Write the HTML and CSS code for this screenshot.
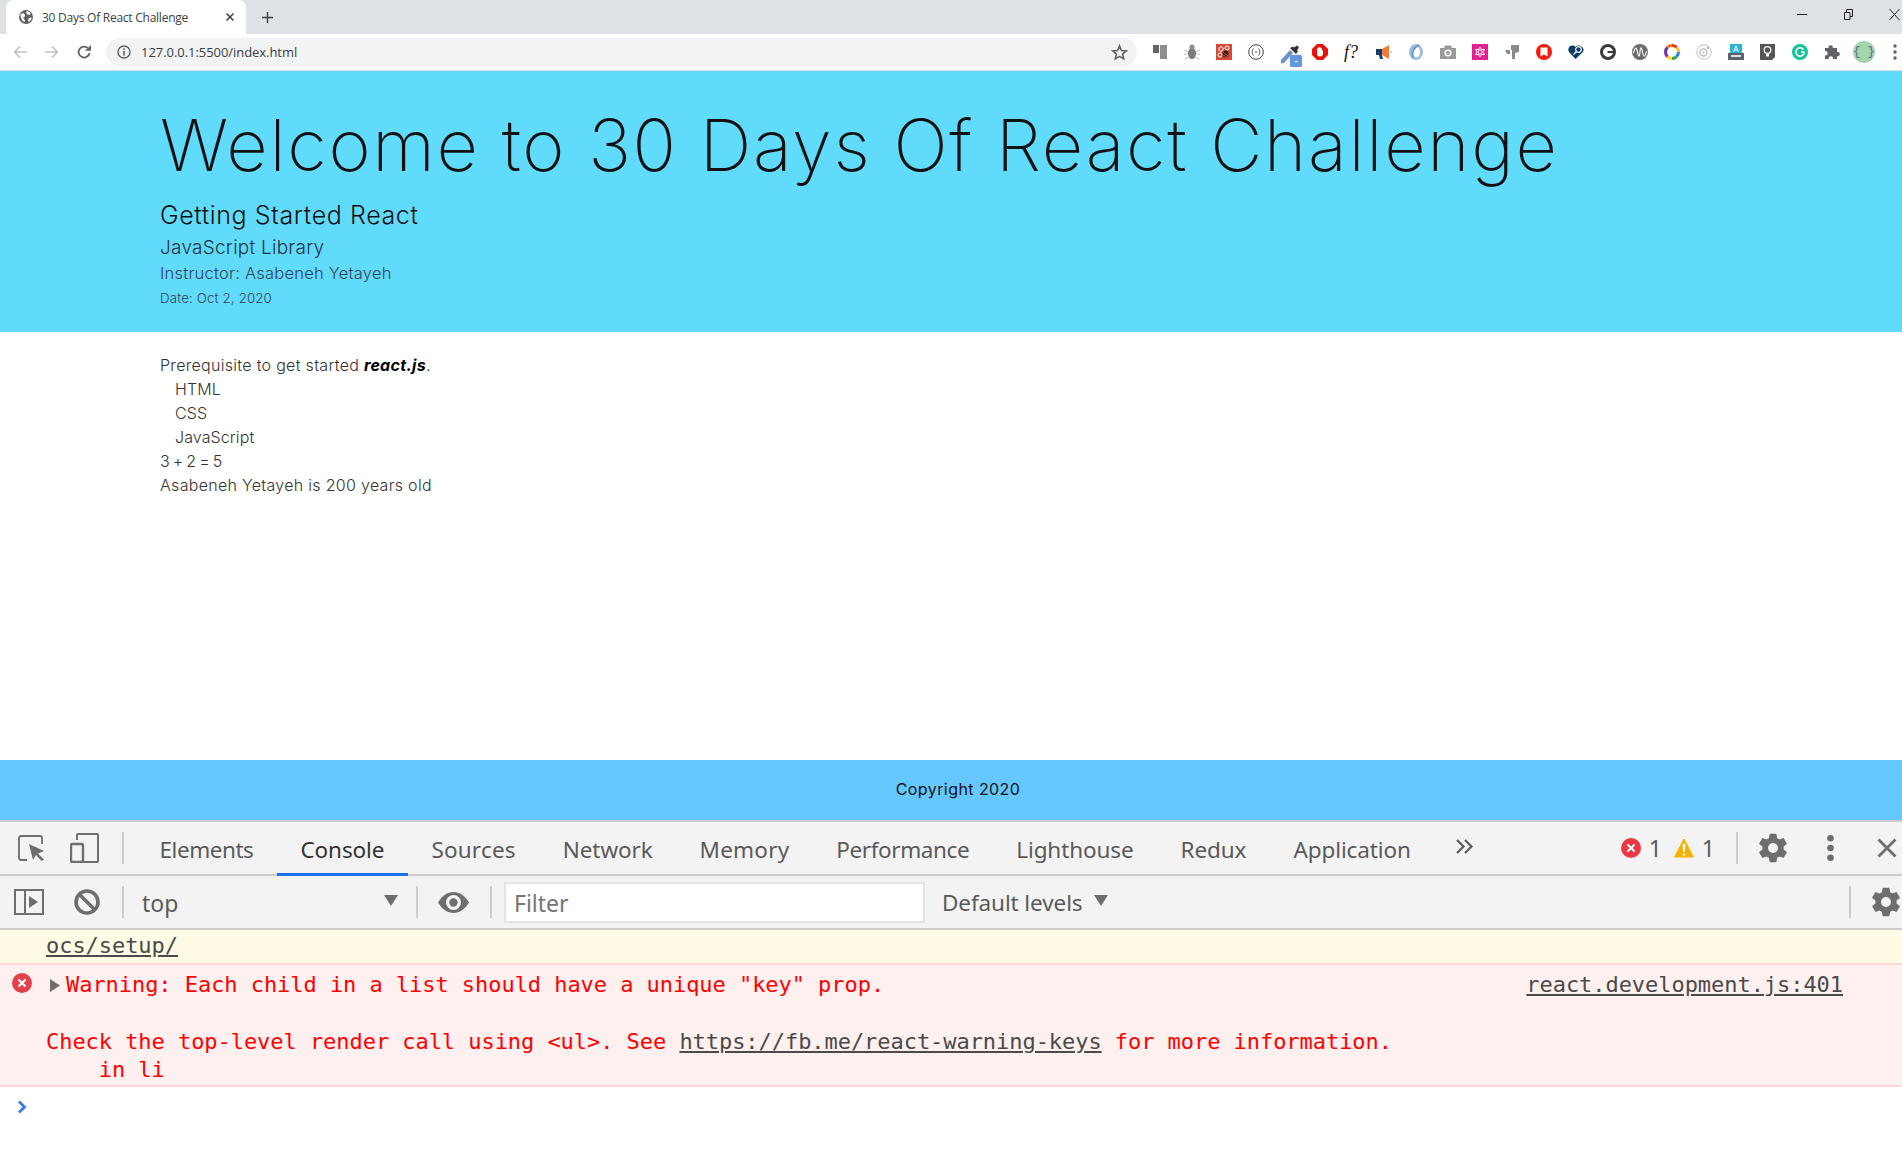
FILE: index.html
```html
<!DOCTYPE html>
<html lang="en">
<head>
<meta charset="utf-8">
<title>30 Days Of React Challenge</title>
<link rel="stylesheet" href="styles.css">
</head>
<body>
<div class="chrome">
  <div class="tabstrip">
    <div class="tab">
      <svg class="favicon" viewBox="0 0 16 16"><circle cx="8" cy="8" r="8" fill="#5f6368"/><path d="M1.500 5l3-1.500 2 1.500.5 2.500-2 .5.500 2.500 1.500 1-1 2.500-2.500-2.500-1.500-3.500zM9 1.200l3 1 1.500 2.800-3.500.5-2-2.500zM11 9.500l3-1 .5 1.500-2.500 3-1.500.5z" fill="#fff"/></svg>
      <span class="tab-title">30 Days Of React Challenge</span>
      <svg class="tab-close" viewBox="0 0 8 8"><path d="M.5.5l7 7M7.500.5l-7 7" stroke="#3c4043" stroke-width="1.500"/></svg>
    </div>
    <svg class="newtab" viewBox="0 0 12 12"><path d="M6 0v12M0 6h12" stroke="#3c4043" stroke-width="1.600"/></svg>
    <div class="winctl">
      <svg viewBox="0 0 11 11"><path d="M0 5.500h10" stroke="#222" stroke-width="1"/></svg>
      <svg viewBox="0 0 11 11"><path d="M1.500 3.500h5.500v7H1.500zM3.500 3.500v-3h6v7H7" fill="none" stroke="#222" stroke-width="1"/></svg>
      <svg viewBox="0 0 11 11"><path d="M.5 0l10 11M10.500 0L.5 11" stroke="#222" stroke-width="1"/></svg>
    </div>
  </div>
  <div class="toolbar">
    <svg class="nav" viewBox="0 0 14 14"><path d="M14 7H1.500M7 1.500L1.500 7 7 12.500" fill="none" stroke="#c0c2c6" stroke-width="1.700"/></svg>
    <svg class="nav" viewBox="0 0 14 14"><path d="M0 7h12.500M7 1.500L12.500 7 7 12.500" fill="none" stroke="#c0c2c6" stroke-width="1.700"/></svg>
    <svg class="nav" viewBox="0 0 14 14"><path d="M12.500 8A5.500 5.500 0 1 1 10.800 3" fill="none" stroke="#5f6368" stroke-width="1.800"/><path d="M8 5.800h6V0z" fill="#5f6368"/></svg>
    <div class="omnibox">
      <svg class="info" viewBox="0 0 14 14"><circle cx="7" cy="7" r="6" fill="none" stroke="#5f6368" stroke-width="1.400"/><path d="M7 6v4.500M7 3.300v1.500" stroke="#5f6368" stroke-width="1.600"/></svg>
      <span class="url">127.0.0.1:5500/index.html</span>
      <svg class="star" viewBox="0 0 16 16"><path d="M8 1.800l1.800 4.300 4.600.4-3.500 3 1.100 4.500L8 11.600l-4 2.400 1.100-4.500-3.500-3 4.600-.4z" fill="none" stroke="#5f6368" stroke-width="1.500"/></svg>
    </div>
    <div class="extensions">
      <svg viewBox="0 0 16 16"><path d="M1 1h6v8H1z" fill="#666"/><path d="M8 1h7v14H8z" fill="#8f8f8f"/></svg>
      <svg viewBox="0 0 16 16"><ellipse cx="8" cy="9.500" rx="4" ry="5.500" fill="#7b7b7b"/><circle cx="8" cy="3" r="2.500" fill="#8a8a8a"/><path d="M0 6l4 2M16 6l-4 2M0 10h4M16 10h-4M1 15l3-2M15 15l-3-2" stroke="#b5b5b5"/></svg>
      <svg viewBox="0 0 16 16"><rect width="16" height="16" fill="#d64a38"/><circle cx="5" cy="5" r="2.200" fill="none" stroke="#fff"/><circle cx="11" cy="4" r="2" fill="none" stroke="#fff"/><circle cx="4" cy="11" r="2" fill="none" stroke="#fff"/><ellipse cx="9.500" cy="10" rx="3" ry="3.500" fill="#222"/><path d="M7 8l5 4M7 11l4 2" stroke="#d64a38"/></svg>
      <svg viewBox="0 0 16 16"><circle cx="8" cy="8" r="7.300" fill="#fff" stroke="#444" stroke-width="1"/><path d="M5.500 4.500C4 6 4.500 7.500 4 8c.5.500 0 2 1.500 3.500M10.500 4.500C12 6 11.500 7.500 12 8c-.5.500 0 2-1.500 3.500M7 8h2" fill="none" stroke="#444"/></svg>
      <svg viewBox="0 0 21 22"><path d="M0 15L9 5l3 3-9 10-3 .5z" fill="#6b92c8"/><path d="M9 3l6 6 2-2.500-1-1 2-3-2-2-3 2-1-1z" fill="#333"/><rect x="9" y="10" width="12" height="12" rx="1.500" fill="#5f97e0"/><rect x="14" y="16" width="2.500" height="1.200" fill="#fff"/></svg>
      <svg viewBox="0 0 16 16"><path d="M5 0h6l5 5v6l-5 5H5l-5-5V5z" fill="#e8140b"/><path d="M5 6V4.500h1V3.500h1V3.200h1v.3h1v1h1v2.500l1-1v3.500c0 2-1 3-3.200 3S5 11 5 9z" fill="#fff"/></svg>
      <span class="ext-f">f?</span>
      <svg viewBox="0 0 16 16"><path d="M0 5h6v6H0zM3 11h3l1 4H4z" fill="#153e63"/><path d="M6 5l7-4v14l-7-4z" fill="#f47a3c"/><path d="M14 7h2v2h-2z" fill="#c6d3de"/></svg>
      <svg viewBox="0 0 16 16"><ellipse cx="8" cy="8" rx="7" ry="8" fill="#9cbde2"/><ellipse cx="8.500" cy="8" rx="3.500" ry="5.500" fill="#fff"/><path d="M5 14C3 9 6 3 11 1" fill="none" stroke="#5f8fc6" stroke-width="1.600"/></svg>
      <svg viewBox="0 0 16 16"><path d="M0 4h4l1-2.500h6L12 4h4v11H0z" fill="#9a9a9a"/><circle cx="8" cy="9" r="3.600" fill="#fff"/><circle cx="8" cy="9" r="2" fill="#9a9a9a"/></svg>
      <svg viewBox="0 0 16 16"><rect width="16" height="16" fill="#e6208f"/><g fill="none" stroke="#fff"><circle cx="8" cy="8" r="2"/><path d="M8 3l1.500 2.500h3L11 8l1.500 2.500h-3L8 13l-1.500-2.500h-3L5 8 3.500 5.500h3z"/></g></svg>
      <svg viewBox="0 0 16 16"><path d="M7 1h8v7l-4 1v6H8V6H7zM1 6h5v4H3z" fill="#8a8a8a"/></svg>
      <svg viewBox="0 0 16 16"><circle cx="8" cy="8" r="8" fill="#f31b0e"/><path d="M4.500 3.500h7v9L8 10.500l-3.500 2z" fill="#fff"/></svg>
      <svg viewBox="0 0 16 16"><path d="M7.500 15L1 8C-1 4 2 1 5 1.500 6.500 1.800 7.500 3 7.500 3S8.500 1.800 10 1.500c3-.5 7 2.500 5 6.500z" fill="#0e3b66"/><circle cx="10.500" cy="5.500" r="2.800" fill="#0e3b66" stroke="#fff" stroke-width="1.200"/><path d="M8.500 7.500l-3 3" stroke="#fff" stroke-width="1.300"/></svg>
      <svg viewBox="0 0 16 16"><circle cx="8" cy="8" r="6.500" fill="#fff" stroke="#3a3a3a" stroke-width="3"/><path d="M7.500 8H14" stroke="#3a3a3a" stroke-width="2"/></svg>
      <svg viewBox="0 0 16 16"><circle cx="8" cy="8" r="8" fill="#6c6c6c"/><path d="M1.500 9C3 3 4.500 2.500 5.500 8s2 5.500 2.500 0 1.500-5.500 2.500 0 2.500 6 4-1" fill="none" stroke="#fff" stroke-width="1.100"/></svg>
      <svg viewBox="0 0 16 16" fill="none" stroke-width="3"><path d="M8 1.500a6.500 6.500 0 0 1 4.600 1.900" stroke="#e53935"/><path d="M12.600 3.400A6.500 6.500 0 0 1 14.500 8" stroke="#fbc02d"/><path d="M14.500 8a6.500 6.500 0 0 1-1.900 4.600" stroke="#1e88e5"/><path d="M12.600 12.600A6.500 6.500 0 0 1 8 14.500" stroke="#43a047"/><path d="M8 14.500a6.500 6.500 0 0 1-4.600-1.900" stroke="#fdd835"/><path d="M3.400 12.600A6.500 6.500 0 0 1 1.500 8" stroke="#8e24aa"/><path d="M1.500 8a6.500 6.500 0 0 1 1.900-4.600" stroke="#5e35b1"/><path d="M3.400 3.400A6.500 6.500 0 0 1 8 1.500" stroke="#f57c00"/></svg>
      <svg viewBox="0 0 16 16"><circle cx="8" cy="8" r="7.200" fill="#fff" stroke="#cfcfcf" stroke-width="1.200"/><circle cx="7.500" cy="8.500" r="3.500" fill="none" stroke="#bdbdbd" stroke-width="1.400"/><circle cx="7.500" cy="8.500" r="1.300" fill="#c8c8c8"/><circle cx="12" cy="4" r="1" fill="#999"/></svg>
      <svg viewBox="0 0 16 16"><rect x="2" y="0" width="12" height="10" fill="#2ab4d8"/><path d="M5.500 8L8 2l2.500 6M6.500 6h3" fill="none" stroke="#fff"/><rect x="0" y="9" width="16" height="7" fill="#5d6468"/><rect x="3" y="11" width="10" height="2" fill="#dde"/></svg>
      <svg viewBox="0 0 16 16"><path d="M0 0h15v13l-3 3H0z" fill="#555"/><circle cx="7.500" cy="6" r="3.300" fill="none" stroke="#fff" stroke-width="1.200"/><rect x="6" y="10" width="3" height="2.500" fill="#fff"/></svg>
      <svg viewBox="0 0 16 16"><circle cx="8" cy="8" r="8" fill="#15c39a"/><path d="M11.500 5.500A4.200 4.200 0 1 0 12 9.500l-.3-1.500H9" fill="none" stroke="#fff" stroke-width="1.600"/></svg>
      <svg viewBox="0 0 16 16"><path d="M1 4h3.500a2.200 2.200 0 1 1 4.300 0H13v4a2.200 2.200 0 1 1 0 4.200V15H9a2.200 2.200 0 1 0-4.200 0H1v-3.500a2.200 2.200 0 1 0 0-4.300z" fill="#5f6368"/></svg>
      <span class="avatar">{ }</span>
      <svg class="kebab" viewBox="0 0 4 16"><circle cx="2" cy="2" r="1.700" fill="#5f6368"/><circle cx="2" cy="8" r="1.700" fill="#5f6368"/><circle cx="2" cy="14" r="1.700" fill="#5f6368"/></svg>
    </div>
  </div>
</div>
<div class="page">
  <header class="hero">
    <h1>Welcome to 30 Days Of React Challenge</h1>
    <h2>Getting Started React</h2>
    <h3>JavaScript Library</h3>
    <p class="instructor">Instructor: Asabeneh Yetayeh</p>
    <small class="date">Date: Oct 2, 2020</small>
  </header>
  <main class="content">
    <p class="line">Prerequisite to get started <strong><em>react.js</em></strong>.</p>
    <ul>
      <li>HTML</li>
      <li>CSS</li>
      <li>JavaScript</li>
    </ul>
    <p class="line sum">3 + 2 = 5</p>
    <p class="line">Asabeneh Yetayeh is 200 years old</p>
  </main>
  <footer class="foot">Copyright 2020</footer>
</div>
<div class="devtools">
  <div class="dt-tabs">
    <svg class="inspect" viewBox="0 0 27 26"><path d="M9 25H3a2 2 0 0 1-2-2V3a2 2 0 0 1 2-2h19a2 2 0 0 1 2 2v6" fill="none" stroke="#6e6e6e" stroke-width="1.800"/><path d="M11 9l15 7-6 2.500 6 6-2.500 1.500-5.500-6-3 5z" fill="#6e6e6e"/></svg>
    <svg class="device" viewBox="0 0 29 30"><path d="M7 7V2a1 1 0 0 1 1-1h19a1 1 0 0 1 1 1v26a1 1 0 0 1-1 1H13" fill="none" stroke="#6e6e6e" stroke-width="2"/><rect x="1" y="11" width="12" height="18" rx="1.500" fill="none" stroke="#6e6e6e" stroke-width="2.400"/></svg>
    <span class="dt-sep after-device"></span>
    <span class="dt-tab t-elements">Elements</span>
    <span class="dt-tab active">Console</span>
    <span class="dt-tab t-wide">Sources</span>
    <span class="dt-tab">Network</span>
    <span class="dt-tab t-wide">Memory</span>
    <span class="dt-tab t-perf">Performance</span>
    <span class="dt-tab">Lighthouse</span>
    <span class="dt-tab">Redux</span>
    <span class="dt-tab">Application</span>
    <svg class="chev" viewBox="0 0 17 15"><path d="M1 1l6.500 6.500L1 14M9 1l6.500 6.500L9 14" fill="none" stroke="#5a5a5a" stroke-width="2.200"/></svg>
    <div class="dt-right">
      <svg class="badge" viewBox="0 0 20 20"><circle cx="10" cy="10" r="10" fill="#ea3941"/><path d="M6.500 6.500l7 7M13.500 6.500l-7 7" stroke="#fff" stroke-width="2"/></svg>
      <span class="count">1</span>
      <svg class="badge" viewBox="0 0 20 20"><path d="M10 1l9.500 18H.5z" fill="#f4b400" stroke="#f4b400" stroke-linejoin="round"/><path d="M8.600 6h2.800l-.5 8H9.100zM8.800 15.500h2.400v2H8.800z" fill="#fff"/></svg>
      <span class="count second">1</span>
      <span class="dt-sep"></span>
      <svg class="gear" viewBox="0 0 24 24"><path fill="#6e6e6e" d="M19.430 12.980c.04-.32.07-.64.07-.98s-.03-.66-.07-.98l2.110-1.650c.19-.15.240-.42.120-.64l-2-3.460c-.12-.22-.39-.3-.61-.22l-2.490 1c-.52-.4-1.080-.73-1.690-.98l-.38-2.650A.49.49 0 0 0 14 2h-4c-.25 0-.46.180-.49.420l-.38 2.650c-.61.25-1.170.59-1.690.98l-2.490-1c-.23-.09-.49 0-.61.220l-2 3.460c-.13.220-.07.490.12.640l2.110 1.650c-.04.320-.07.650-.07.980s.03.660.07.980l-2.110 1.650c-.19.150-.24.420-.12.640l2 3.460c.12.220.39.300.61.220l2.490-1c.52.400 1.080.730 1.690.980l.38 2.650c.03.240.24.420.49.420h4c.25 0 .46-.18.490-.42l.38-2.650c.61-.25 1.170-.59 1.690-.98l2.490 1c.23.090.49 0 .61-.22l2-3.460c.12-.22.070-.49-.12-.64l-2.110-1.650zM12 15.500a3.500 3.500 0 1 1 0-7 3.500 3.500 0 0 1 0 7z"/></svg>
      <svg class="dots" viewBox="0 0 7 26"><circle cx="3.500" cy="3.300" r="3.300" fill="#6e6e6e"/><circle cx="3.500" cy="13" r="3.300" fill="#6e6e6e"/><circle cx="3.500" cy="22.700" r="3.300" fill="#6e6e6e"/></svg>
      <svg class="close" viewBox="0 0 20 20"><path d="M1.500 1.500l17 17M18.500 1.500l-17 17" stroke="#6e6e6e" stroke-width="2.800"/></svg>
    </div>
  </div>
  <div class="dt-bar">
    <svg class="sidebar" viewBox="0 0 30 26"><path d="M1 1h28v24H1zM11 1v24" fill="none" stroke="#6e6e6e" stroke-width="2"/><path d="M15 7l9 6-9 6z" fill="#6e6e6e"/></svg>
    <svg class="clear" viewBox="0 0 26 26"><circle cx="13" cy="13" r="11" fill="none" stroke="#6e6e6e" stroke-width="3.600"/><path d="M5.500 5.500l15 15" stroke="#6e6e6e" stroke-width="3.600"/></svg>
    <span class="dt-sep"></span>
    <span class="ctx">top</span>
    <svg class="tri" viewBox="0 0 14 11"><path d="M0 0h14L7 11z" fill="#6e6e6e"/></svg>
    <span class="dt-sep sep-ctx"></span>
    <svg class="eye" viewBox="0 0 31 21"><path d="M0 10.500C4 4 9.500 0 15.500 0S27 4 31 10.500C27 17 21.500 21 15.500 21S4 17 0 10.500z" fill="#6e6e6e"/><circle cx="15.500" cy="10.500" r="7.500" fill="#f3f3f3"/><circle cx="15.500" cy="10.500" r="4.200" fill="#6e6e6e"/></svg>
    <span class="dt-sep"></span>
    <span class="filter">Filter</span>
    <span class="levels">Default levels</span>
    <svg class="tri level-tri" viewBox="0 0 14 11"><path d="M0 0h14L7 11z" fill="#6e6e6e"/></svg>
    <span class="dt-sep end"></span>
    <svg class="gear bar-gear" viewBox="0 0 24 24"><path fill="#6e6e6e" d="M19.430 12.980c.04-.32.07-.64.07-.98s-.03-.66-.07-.98l2.110-1.650c.19-.15.240-.42.120-.64l-2-3.460c-.12-.22-.39-.3-.61-.22l-2.490 1c-.52-.4-1.080-.73-1.690-.98l-.38-2.650A.49.49 0 0 0 14 2h-4c-.25 0-.46.180-.49.420l-.38 2.650c-.61.25-1.170.59-1.690.98l-2.490-1c-.23-.09-.49 0-.61.220l-2 3.460c-.13.220-.07.490.12.640l2.110 1.650c-.04.320-.07.650-.07.980s.03.660.07.980l-2.110 1.650c-.19.150-.24.420-.12.640l2 3.460c.12.220.39.300.61.220l2.490-1c.52.400 1.080.730 1.690.980l.38 2.650c.03.240.24.420.49.420h4c.25 0 .46-.18.490-.42l.38-2.650c.61-.25 1.170-.59 1.690-.98l2.490 1c.23.090.49 0 .61-.22l2-3.460c.12-.22.070-.49-.12-.64l-2.110-1.650zM12 15.500a3.500 3.500 0 1 1 0-7 3.500 3.500 0 0 1 0 7z"/></svg>
  </div>
  <div class="console">
    <div class="warnline"><a class="link dark">ocs/setup/</a></div>
    <div class="errline">
      <div class="err-first">
        <svg class="err-icon" viewBox="0 0 20 20"><circle cx="10" cy="10" r="10" fill="#e2404a"/><path d="M6.500 6.500l7 7M13.500 6.500l-7 7" stroke="#fff" stroke-width="2.200"/></svg>
        <svg class="err-tri" viewBox="0 0 10 13"><path d="M0 0l10 6.500L0 13z" fill="#6e6e6e"/></svg>
        <span>Warning: Each child in a list should have a unique "key" prop.</span>
        <a class="link dark src">react.development.js:401</a>
      </div>
      <div class="err-body"><span>Check the top-level render call using &lt;ul&gt;. See </span><a class="link dark">https://fb.me/react-warning-keys</a><span> for more information.</span>
<span>    in li</span></div>
    </div>
    <div class="prompt"><svg viewBox="0 0 11 14"><path d="M2 1.500L7.500 7 2 12.500" fill="none" stroke="#3a7bea" stroke-width="2.800"/></svg></div>
  </div>
</div>
</body>
</html>
```
FILE: styles.css
```css
* { box-sizing: border-box; }
html, body { margin: 0; height: 100%; }
body { width: 1902px; height: 1156px; overflow: hidden; display: flex; flex-direction: column; background: #fff; font-family: "Inter", "Liberation Sans", sans-serif; }
svg { display: block; flex: none; }

.chrome { flex: none; height: 71px; border-bottom: 1px solid #dadce0; }
.tabstrip { height: 34px; background: #dee1e6; display: flex; align-items: center; padding-left: 6px; }
.tab { width: 240px; height: 34px; background: #fff; border-radius: 8px 8px 0 0; display: flex; align-items: center; padding: 0 12px 0 13px; }
.favicon { width: 14px; height: 14px; }
.tab-title { margin-left: 9px; flex: 1; font: 12px "Open Sans", sans-serif; color: #3c4043; letter-spacing: -.25px; white-space: nowrap; }
.tab-close { width: 8px; height: 8px; }
.newtab { width: 11px; height: 11px; margin-left: 16px; }
.winctl { margin-left: auto; display: flex; gap: 35px; padding-right: 2px; margin-top: -6px; }
.winctl svg { width: 11px; height: 11px; }

.toolbar { height: 36px; display: flex; align-items: center; padding-left: 13px; }
.nav { width: 14px; height: 14px; margin-right: 18px; }
.nav:nth-of-type(3) { margin-right: 15px; }
.omnibox { width: 1031px; flex: none; height: 28px; background: #f1f3f4; border-radius: 14px; display: flex; align-items: center; padding: 0 9px 0 11px; }
.info { width: 14px; height: 14px; }
.url { margin-left: 10px; flex: 1; font: 13px "Open Sans", sans-serif; color: #3c4043; letter-spacing: -.05px; }
.star { width: 17px; height: 17px; }
.extensions { display: flex; flex: none; align-items: center; margin-left: 15px; }
.extensions > svg, .ext-f { width: 16px; height: 16px; margin-right: 16px; }
.extensions > svg:nth-of-type(5) { width: 21px; height: 22px; margin: 7px 10px 0 1px; }
.ext-f { font: italic 18px/16px "Liberation Serif", serif; color: #111; white-space: nowrap; }
.avatar { width: 22px; height: 22px; border-radius: 50%; background: #a3d6aa; color: #4a6a9a; font: 12px/22px "Liberation Mono", monospace; text-align: center; margin: 0 18px 0 -3px; white-space: nowrap; }
.extensions > .kebab { width: 4px; height: 16px; margin: 0; }

.page { height: 749px; flex: none; display: flex; flex-direction: column; font-family: "Inter", sans-serif; font-weight: 300; }
.hero { height: 261px; background: #61dbfb; padding: 38px 0 0 160px; flex: none; color: #111; }
.hero h1 { margin: 0; font-size: 72px; line-height: 72px; font-weight: 200; white-space: nowrap; letter-spacing: 1.7px; }
.hero h2 { margin: 19px 0 0; font-size: 25px; line-height: 30px; font-weight: 300; letter-spacing: .6px; }
.hero h3 { margin: 5px 0 0; font-size: 19px; line-height: 26px; font-weight: 300; letter-spacing: .25px; color: #234; }
.instructor { margin: 0; font-size: 16.500px; line-height: 24px; letter-spacing: .23px; color: #345; }
.date { display: block; margin-top: 2px; font-size: 13.300px; line-height: 22px; letter-spacing: .14px; color: #345; }
.content { flex: 1; padding: 21px 0 0 160px; font-size: 16px; line-height: 24px; letter-spacing: .3px; color: #333; }
.line { margin: 0; }
.line.sum { letter-spacing: -.7px; }
.content strong { font-weight: 700; color: #000; }
.content ul { margin: 0; padding: 0 0 0 15px; list-style: none; letter-spacing: .1px; }
.foot { height: 60px; flex: none; background: #64c8ff; display: flex; align-items: center; justify-content: center; padding: 0 0 2px 14px; font-size: 16px; letter-spacing: .43px; font-weight: 400; color: #111; }

.devtools { flex: 1; min-height: 0; background: #fff; display: flex; flex-direction: column; border-top: 2px solid #ccc; font-family: "Noto Sans", sans-serif; }
.dt-tabs { height: 54px; flex: none; background: #f3f3f3; border-bottom: 2px solid #ccc; display: flex; align-items: center; padding-left: 18px; }
.inspect { width: 27px; height: 26px; margin-right: 25px; }
.device { width: 29px; height: 30px; margin-right: 23px; }
.dt-sep { width: 2px; height: 32px; background: #ccc; flex: none; }
.dt-sep.after-device { margin-right: 12px; }
.dt-tab { font-size: 22.500px; letter-spacing: -.1px; color: #5a5a5a; padding: 0 23.500px; height: 52px; line-height: 55px; white-space: nowrap; position: relative; }
.t-elements { letter-spacing: -.45px; }
.t-wide { letter-spacing: .2px; }
.t-perf { letter-spacing: -.4px; }
.dt-tab.active { color: #333; }
.dt-tab.active::after { content: ""; position: absolute; left: 0; right: 0; bottom: -2px; height: 3px; background: #1a73e8; }
.chev { width: 17px; height: 15px; margin: -3px 0 0 22px; }
.dt-right { margin-left: auto; display: flex; align-items: center; padding-right: 5px; }
.badge { width: 20px; height: 20px; margin-right: 8px; }
.count { font-size: 23px; line-height: 34px; color: #5a5a5a; margin-right: 12px; }
.count.second { margin-right: 21px; }
.gear { width: 34px; height: 34px; margin-left: 18px; margin-right: 37px; }
.dots { width: 7px; height: 26px; margin-right: 43px; }
.close { width: 20px; height: 20px; }
.dt-bar { height: 54px; flex: none; background: #f3f3f3; border-bottom: 2px solid #ccc; display: flex; align-items: center; padding-left: 14px; }
.sidebar { width: 30px; height: 26px; margin-right: 30px; }
.clear { width: 26px; height: 26px; margin-right: 22px; }
.ctx { font-size: 23px; line-height: 34px; color: #5a5a5a; margin-left: 18px; width: 242px; padding-top: 1px; }
.tri { width: 14px; height: 11px; margin-top: -3px; }
.sep-ctx { margin-left: 18px; }
.eye { width: 31px; height: 21px; margin: 0 21px 0 20px; }
.filter { margin-left: 12px; width: 421px; height: 41px; border: 2px solid #e4e4e4; background: #fff; font-size: 23px; line-height: 39px; color: #757575; padding-left: 8px; }
.levels { margin-left: 17px; font-size: 22.500px; letter-spacing: -.1px; color: #5a5a5a; }
.level-tri { margin-left: 11px; }
.dt-sep.end { margin-left: auto; }
.bar-gear { margin: 0 -1px 0 18px; }

.console { flex: 1; font: 22px/28px "DejaVu Sans Mono", monospace; letter-spacing: -.05px; display: flex; flex-direction: column; }
.warnline { height: 35px; flex: none; padding-left: 46px; background: #fffbe5; border-bottom: 2px solid #ffd4d4; line-height: 31px; }
.errline { height: 122px; flex: none; padding: 6px 0 0 12px; background: #fff0f0; border-bottom: 2px solid #ffd4d4; color: #f00; }
.link { text-decoration: underline; }
.link.dark { color: #4a4a4a; }
.err-first { height: 28px; display: flex; align-items: center; }
.err-icon { width: 20px; height: 20px; margin-top: -4px; }
.err-tri { width: 10px; height: 13px; margin: 0 6px 0 18px; }
.src { margin-left: auto; margin-right: 59px; }
.err-body { margin: 29px 0 0 34px; white-space: pre; }
.prompt { flex: none; padding: 13px 0 0 17px; }
.prompt svg { width: 11px; height: 14px; }
```
